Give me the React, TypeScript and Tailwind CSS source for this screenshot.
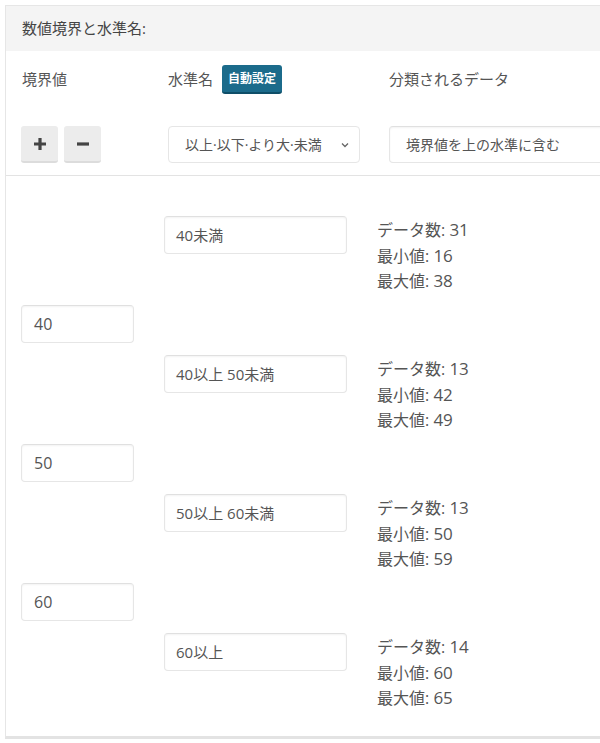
import React from 'react';

const FONT = { fontFamily: '"Open Sans", "Noto Sans CJK JP", sans-serif' };

const levels = [
  { name: '40未満', count: 31, min: 16, max: 38 },
  { name: '40以上 50未満', count: 13, min: 42, max: 49 },
  { name: '50以上 60未満', count: 13, min: 50, max: 59 },
  { name: '60以上', count: 14, min: 60, max: 65 },
];

const bounds = ['40', '50', '60'];

function Field({ value, className }: { value: string; className: string }) {
  return (
    <div
      className={`flex items-center whitespace-nowrap rounded-[4px] border border-[#e6e6e6] border-t-[#e0e0e0] bg-white shadow-[inset_0_1px_2px_rgba(0,0,0,0.05)] ${className}`}
    >
      {value}
    </div>
  );
}

function LevelRow({ level }: { level: (typeof levels)[number] }) {
  return (
    <div className="flex h-[77px] pl-[143px]">
      <Field value={level.name} className="h-[38px] w-[183px] pl-[11px] text-[15px] text-[#555]" />
      <div className="ml-[30px] mt-[2px] text-[16px] leading-[25.5px] text-[#555]">
        <div className="h-[25.5px]">データ数: <span className="text-[17px] leading-none">{level.count}</span></div>
        <div className="h-[25.5px]">最小値: <span className="text-[17px] leading-none">{level.min}</span></div>
        <div className="h-[25.5px]">最大値: <span className="text-[17px] leading-none">{level.max}</span></div>
      </div>
    </div>
  );
}

export default function App() {
  return (
    <div className="h-[743px] w-[600px] overflow-hidden bg-white" style={FONT}>
      <div className="ml-[5px] mt-[5px] w-[640px] border-b-[3px] border-l border-t border-[#e6e6e6] border-b-[#e3e3e3]">
        <div className="flex h-[45px] items-center bg-[#f4f4f4] pl-[16px] text-[15px] text-[#444]">
          数値境界と水準名:
        </div>

        <div className="border-b border-[#e3e3e3] pb-[12px] pl-[15px] pt-[14px]">
          <div className="grid grid-cols-[147px_221px_1fr] items-center text-[15px] text-[#555]">
            <div className="pl-[1px]">境界値</div>
            <div className="flex items-center gap-[9px]">
              <span>水準名</span>
              <span className="rounded-[3px] border-b-2 border-[#0f4e68] bg-[#1b6b8b] px-[6px] py-[4px] text-[12px] font-bold leading-[19px] text-white">
                自動設定
              </span>
            </div>
            <div>分類されるデータ</div>
          </div>

          <div className="mt-[32px] grid grid-cols-[147px_221px_1fr] items-center">
            <div className="flex gap-[6px]">
              <button className="flex h-[37px] w-[37px] items-center justify-center rounded-[3px] border-b-2 border-[#dcdcdc] bg-[#ececec] text-[#444]">
                <svg width="16" height="16" viewBox="0 0 16 16">
                  <path d="M8 2v12M2 8h12" stroke="currentColor" strokeWidth="3.2" />
                </svg>
              </button>
              <button className="flex h-[37px] w-[37px] items-center justify-center rounded-[3px] border-b-2 border-[#dcdcdc] bg-[#ececec] text-[#444]">
                <svg width="16" height="16" viewBox="0 0 16 16">
                  <path d="M2 8h12" stroke="currentColor" strokeWidth="3.2" />
                </svg>
              </button>
            </div>
            <div className="flex h-[37px] w-[192px] items-center justify-between whitespace-nowrap rounded-[4px] border border-[#e6e6e6] pl-[16px] pr-[9px] text-[14px] text-[#555]">
              <span>以上·以下·より大·未満</span>
              <svg width="10" height="10" viewBox="0 0 10 10" className="text-[#666]">
                <path d="M2 3.5l3 3 3-3" fill="none" stroke="currentColor" strokeWidth="1.3" />
              </svg>
            </div>
            <Field value="境界値を上の水準に含む" className="h-[37px] w-[240px] pl-[16px] text-[14px] text-[#555]" />
          </div>
        </div>

        <div className="pb-[26px] pl-[15px] pt-[40px]">
          {levels.map((lv, i) => (
            <React.Fragment key={lv.name}>
              <LevelRow level={lv} />
              {i < bounds.length && (
                <div className="py-[12px]">
                  <Field value={bounds[i]} className="h-[38px] w-[113px] pl-[12px] text-[16px] text-[#555]" />
                </div>
              )}
            </React.Fragment>
          ))}
        </div>
      </div>
    </div>
  );
}
